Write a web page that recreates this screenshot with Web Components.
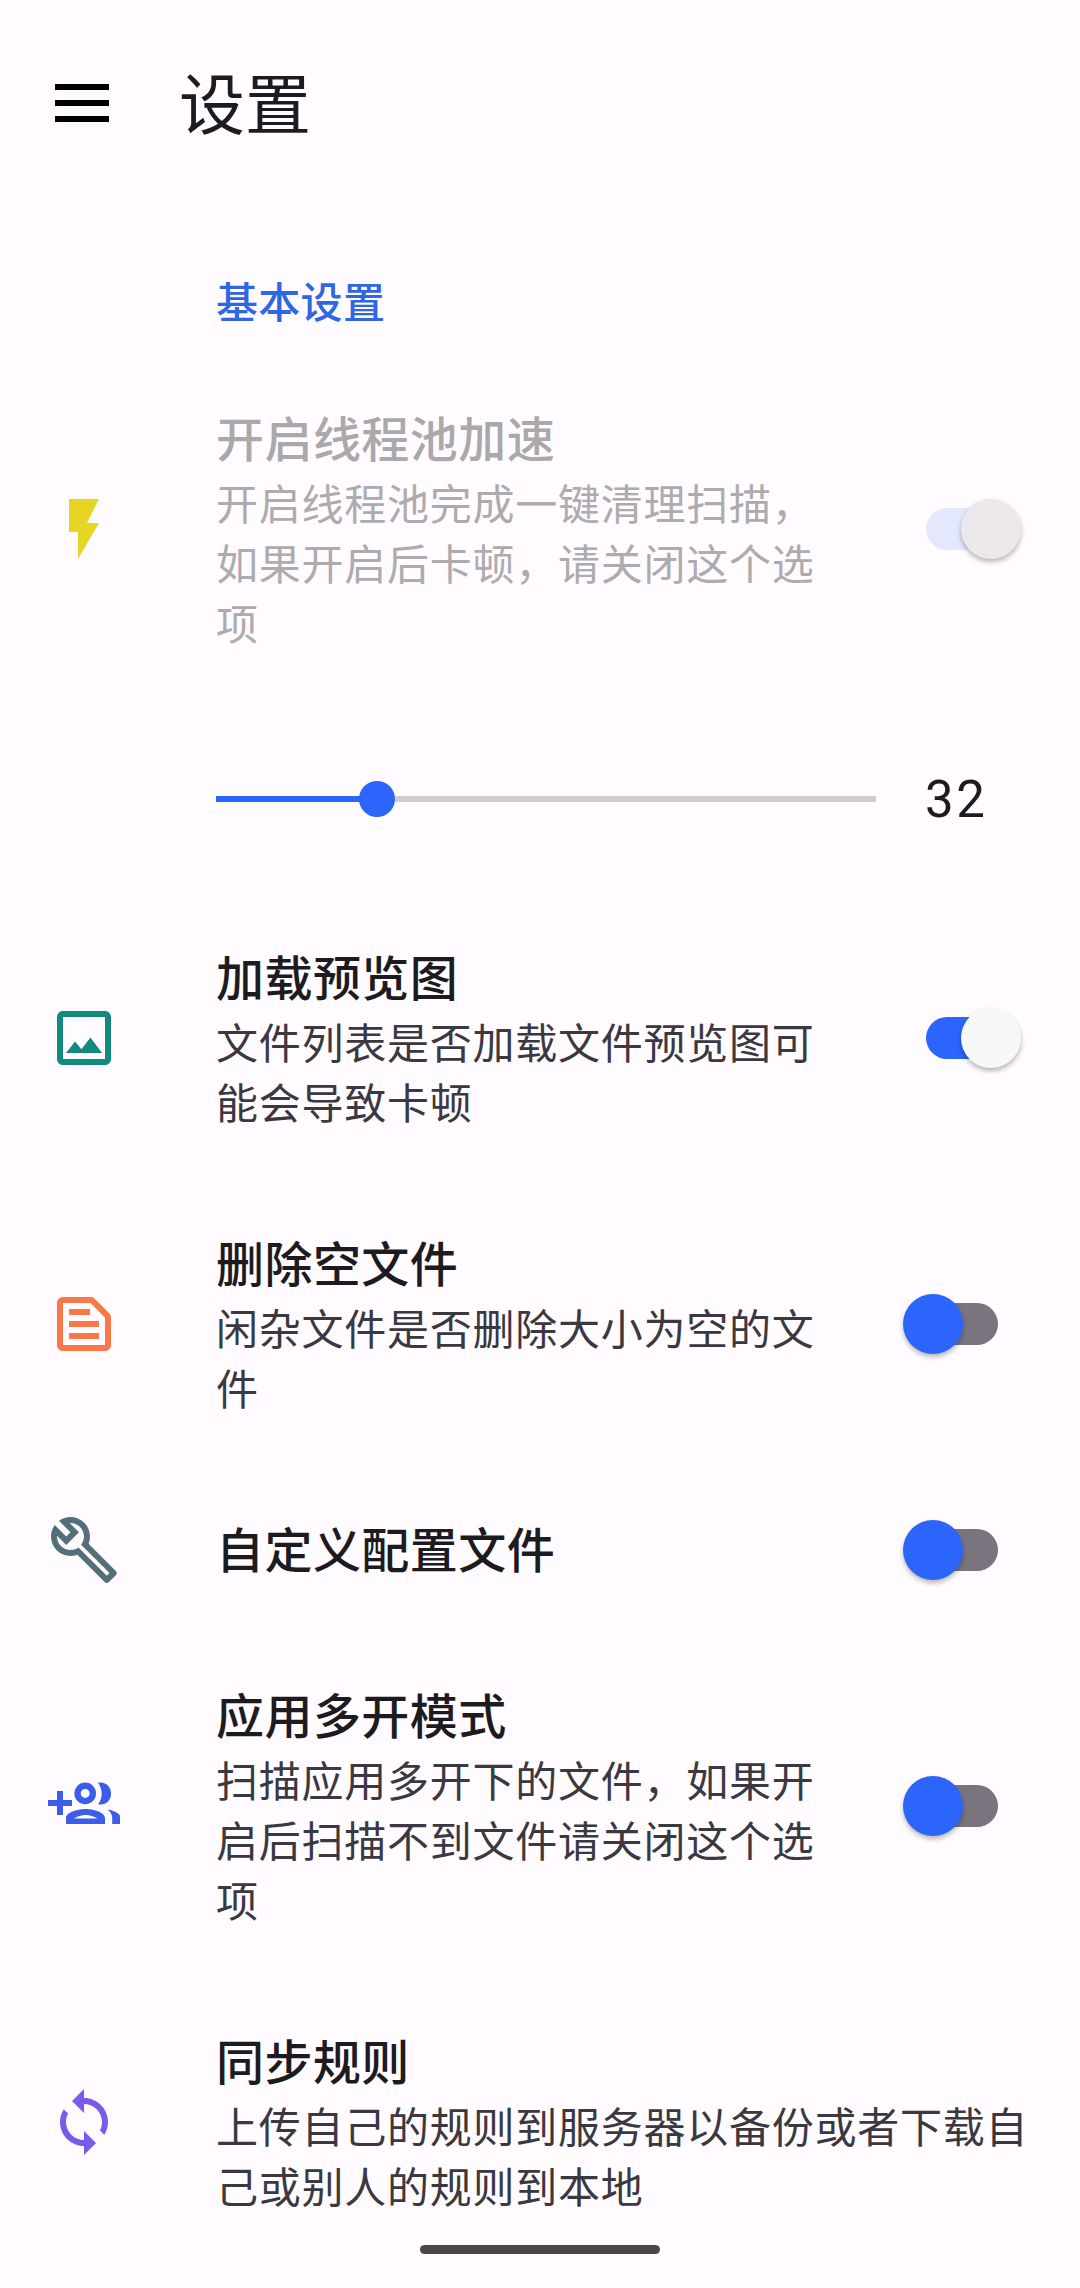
<!DOCTYPE html>
<html lang="zh-CN"><head><meta charset="utf-8"><title>设置</title>
<style>
html,body{margin:0;padding:0;background:#fffbfe}
body{width:1080px;height:2288px;overflow:hidden;position:relative;font-family:"Noto Sans CJK SC","Noto Sans",sans-serif;color:#1c1b1f}
</style></head><body>
<app-bar>设置</app-bar>
<section-label>基本设置</section-label>
<setting-row disabled>
  <svg slot="icon" viewBox="0 0 24 24" fill="#e6d623"><path d="M7 2v11h3v9l7-12h-4l4-8z"/></svg>
  <span slot="title">开启线程池加速</span>
  开启线程池完成一键清理扫描，如果开启后卡顿，请关闭这个选项
  <md-switch slot="control" on disabled></md-switch>
</setting-row>
<value-slider value="32" percent="24.4"></value-slider>
<setting-row>
  <svg slot="icon" viewBox="0 0 24 24" fill="#0f8a7d"><path d="M19 5v14H5V5h14m0-2H5c-1.1 0-2 .9-2 2v14c0 1.1.9 2 2 2h14c1.1 0 2-.9 2-2V5c0-1.1-.9-2-2-2zm-4.86 8.86l-3 3.87L9 13.14 6 17h12l-3.86-5.14z"/></svg>
  <span slot="title">加载预览图</span>
  文件列表是否加载文件预览图可能会导致卡顿
  <md-switch slot="control" on></md-switch>
</setting-row>
<setting-row>
  <svg slot="icon" viewBox="0 0 24 24" fill="#f97748"><path d="M14.17 5L19 9.83V19H5V5h9.17m0-2H5c-1.1 0-2 .9-2 2v14c0 1.1.9 2 2 2h14c1.1 0 2-.9 2-2V9.83c0-.53-.21-1.04-.59-1.41l-4.83-4.83c-.37-.38-.88-.59-1.41-.59zM7 15h10v2H7v-2zm0-4h10v2H7v-2zm0-4h7v2H7V7z"/></svg>
  <span slot="title">删除空文件</span>
  闲杂文件是否删除大小为空的文件
  <md-switch slot="control"></md-switch>
</setting-row>
<setting-row>
  <svg slot="icon" viewBox="0 0 24 24" fill="#546e7a"><path d="M22.61 18.99l-9.08-9.08c.93-2.34.45-5.1-1.44-7C9.79.61 6.21.4 3.66 2.26L7.5 6.11 6.08 7.52 2.25 3.69C.39 6.23.6 9.82 2.9 12.11c1.86 1.86 4.57 2.35 6.89 1.48l9.11 9.11c.39.39 1.02.39 1.41 0l2.3-2.3c.4-.38.4-1.01 0-1.41zm-3 1.6l-9.46-9.46c-.61.45-1.29.72-2 .82-1.36.2-2.79-.21-3.83-1.25C3.37 9.76 2.93 8.5 3 7.26l3.09 3.09 4.24-4.24-3.09-3.09c1.24-.07 2.49.37 3.44 1.31 1.08 1.08 1.49 2.57 1.24 3.96-.12.71-.42 1.37-.88 1.96l9.45 9.45-.88.88z"/></svg>
  <span slot="title">自定义配置文件</span>
  <md-switch slot="control"></md-switch>
</setting-row>
<setting-row>
  <svg slot="icon" viewBox="0 0 24 24" fill="#3c5ceb" fill-rule="evenodd"><path d="M8 10H5V7H3v3H0v2h3v3h2v-3h3v-2zM12.4 4.2a3.6 3.6 0 1 0 0 7.2 3.6 3.6 0 0 0 0-7.2zm0 2.1a1.5 1.5 0 1 1 0 3 1.5 1.5 0 0 1 0-3zM17.6 11.5c2 0 3.4-1.6 3.4-3.6s-1.4-3.7-3.4-3.7c-.3 0-.6 0-.9.1.7.9 1.2 2.2 1.2 3.6s-.5 2.6-1.2 3.5c.3.1.6.1.9.1zM19.9 13.2c1 .8 1.5 1.8 1.5 2.8v2h2.8v-2c0-1.5-2.3-2.5-4.3-2.8zM12.6 13c-2.3 0-6.6 1-6.6 3v2h13v-2c0-2-4.2-3-6.4-3zm-4 3.2c.8-.6 2.6-1.2 4-1.2s3.1.6 3.9 1.2z"/></svg>
  <span slot="title">应用多开模式</span>
  扫描应用多开下的文件，如果开启后扫描不到文件请关闭这个选项
  <md-switch slot="control"></md-switch>
</setting-row>
<setting-row>
  <svg slot="icon" viewBox="0 0 24 24" fill="#7b59ea"><path d="M12 4V1L8 5l4 4V6c3.31 0 6 2.69 6 6 0 1.01-.25 1.97-.7 2.8l1.46 1.46C19.54 15.03 20 13.57 20 12c0-4.42-3.58-8-8-8zm0 14c-3.31 0-6-2.69-6-6 0-1.01.25-1.97.7-2.8L5.24 7.74C4.46 8.97 4 10.43 4 12c0 4.42 3.58 8 8 8v3l4-4-4-4v3z"/></svg>
  <span slot="title">同步规则</span>
  上传自己的规则到服务器以备份或者下载自己或别人的规则到本地
</setting-row>
<nav-handle></nav-handle>
<script>
function def(name, css, html, init){
  customElements.define(name, class extends HTMLElement{
    constructor(){super();const r=this.attachShadow({mode:"open"});r.innerHTML="<style>"+css+"</style>"+html;}
    connectedCallback(){ if(init) init(this); }
  });
}
def("app-bar",
  ":host{display:flex;align-items:center;height:206px;padding-left:55px;font-size:66px;line-height:80px;color:#1c1b1f}"+
  "svg{display:block;width:54px;height:38px;flex:none;margin-right:70px}"+
  ".t{margin-top:-6px}",
  '<svg viewBox="0 0 54 38" fill="#000"><rect width="54" height="6"/><rect y="16" width="54" height="6"/><rect y="32" width="54" height="6"/></svg><div class="t"><slot></slot></div>');
def("section-label",
  ":host{display:block;margin:64px 0 26px;padding-left:216px;font-size:42px;line-height:60px;font-weight:500;letter-spacing:.3px;color:#2f66e4}",
  "<slot></slot>");
def("setting-row",
  ":host{display:flex;align-items:center;padding:50px 59px 50px 0;box-sizing:border-box}"+
  ".icon{flex:none;width:216px;height:66px;padding-left:48px;box-sizing:border-box;display:flex;align-items:center}"+
  "::slotted(svg){display:block;width:72px;height:72px;flex:none}"+
  ".text{flex:none;width:600px;font-size:42px;line-height:60px;letter-spacing:.75px;color:var(--sub,#3a3840)}"+
  ":host(.wide) .text{width:820px}"+
  ".title{display:block;font-size:48px;line-height:60px;padding-bottom:6px;font-weight:500;letter-spacing:.45px;color:var(--head,#1c1b1f)}"+
  ".ctl{margin-left:auto;display:flex}"+
  ":host([disabled]){--sub:#adabae;--head:#aaa8ab}",
  '<div class="icon"><slot name="icon"></slot></div><div class="text"><span class="title"><slot name="title"></slot></span><slot></slot></div><div class="ctl"><slot name="control"></slot></div>',
  function(el){ if(!el.querySelector('[slot=control]')) el.classList.add('wide'); });
def("md-switch",
  ":host{display:block;position:relative;width:118px;height:60px}"+
  ".track{position:absolute;left:23px;top:9px;width:72px;height:42px;border-radius:21px;background:#79747e}"+
  ".thumb{position:absolute;left:0;top:0;width:60px;height:60px;border-radius:50%;background:#2b65fb;box-shadow:0 3px 5px rgba(0,0,0,.28)}"+
  ":host([on]) .track{background:#2b65fb}"+
  ":host([on]) .thumb{left:58px;background:#f7f8f8}"+
  ":host([disabled]) .track{background:#e4e8fc}"+
  ":host([disabled]) .thumb{background:#ece8eb}",
  '<div class="track"></div><div class="thumb"></div>');
def("value-slider",
  ":host{display:flex;align-items:center;height:193px;padding-left:216px;font-family:Roboto,sans-serif}"+
  ".track{position:relative;width:660px;height:6px;background:#cfcbce}"+
  ".fill{height:100%;background:#2b65fb}"+
  ".thumb{position:absolute;top:-15px;width:36px;height:36px;margin-left:-18px;border-radius:50%;background:#2b65fb}"+
  ".val{margin:2px 0 0 49px;font-size:51px;line-height:60px;letter-spacing:2.5px;color:#1c1b1f}",
  '<div class="track"><div class="fill"></div><div class="thumb"></div></div><div class="val"></div>',
  function(el){const s=el.shadowRoot,p=el.getAttribute("percent")+"%";s.querySelector(".fill").style.width=p;s.querySelector(".thumb").style.left=p;s.querySelector(".val").textContent=el.getAttribute("value");});
def("nav-handle",
  ":host{position:absolute;left:420px;top:2245px;width:240px;height:9px;border-radius:5px;background:#49474a}",
  "");
</script>
</body></html>
